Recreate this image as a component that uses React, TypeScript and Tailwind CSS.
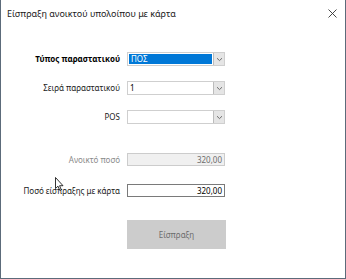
import React from 'react';

const font = { fontFamily: '"Noto Sans", "Liberation Sans", sans-serif' };

const Chevron = () => (
  <svg width="7" height="5" viewBox="0 0 7 5" className="text-[#606060]">
    <path d="M1 1.2 L3.5 3.6 L6 1.2" fill="none" stroke="currentColor" strokeWidth="0.9" />
  </svg>
);

const Combo = ({ value, selected }: { value: string; selected?: boolean }) => (
  <div className="flex h-[14px] w-[98px] border border-[#cfcfcf] bg-white">
    <div className={`flex flex-1 items-center px-[2px] text-[8px] leading-none ${selected ? 'm-[1px] bg-[#0078d7] text-white' : 'text-black'}`}>
      {value}
    </div>
    <div className="flex w-[11px] items-center justify-center border-l border-[#bcbcbc] bg-[#e5e5e5]">
      <Chevron />
    </div>
  </div>
);

const Row = ({ label, bold, muted, children, className = '' }: { label: string; bold?: boolean; muted?: boolean; children: React.ReactNode; className?: string }) => (
  <div className={`flex items-center ${className}`}>
    <div className={`w-[119px] text-right text-[8px] leading-none ${bold ? 'font-bold text-black' : muted ? 'text-[#8a8a8a]' : 'text-[#1a1a1a]'}`}>
      {label}
    </div>
    <div className="ml-[7px]">{children}</div>
  </div>
);

export default function App() {
  return (
    <div style={font} className="relative flex h-[279px] w-[346px] flex-col border-x border-b border-[#5c6b7a] bg-white">
      <div className="flex h-[27px] items-center justify-between pl-[6px] pr-[8px]">
        <span className="text-[9px] text-[#1a1a1a]">Είσπραξη ανοικτού υπολοίπου με κάρτα</span>
        <svg width="9" height="9" viewBox="0 0 9 9">
          <path d="M0.5 0.5 L8.5 8.5 M8.5 0.5 L0.5 8.5" stroke="#333" strokeWidth="0.9" />
        </svg>
      </div>

      <div className="flex flex-col pt-[25px]">
        <Row label="Τύπος παραστατικού" bold>
          <Combo value="ΠΟΣ" selected />
        </Row>
        <Row label="Σειρά παραστατικού" className="mt-[15px]">
          <Combo value="1" />
        </Row>
        <Row label="POS" className="mt-[15px]">
          <Combo value="" />
        </Row>
        <Row label="Ανοικτό ποσό" muted className="mt-[29px]">
          <div className="flex h-[13px] w-[98px] items-center justify-end border border-[#cccccc] bg-[#f0f0f0] px-[2px] text-[8px] leading-none text-[#6d6d6d]">
            320,00
          </div>
        </Row>
        <Row label="Ποσό είσπραξης με κάρτα" className="mt-[18px]">
          <div className="flex h-[13px] w-[98px] items-center justify-end border border-[#7a7a7a] bg-white px-[2px] text-[8px] leading-none text-black">
            320,00
          </div>
        </Row>
        <div className="ml-[126px] mt-[23px] flex h-[29px] w-[99px] items-center justify-center bg-[#cccccc] text-[8px] text-[#6d6d6d]">
          Είσπραξη
        </div>
      </div>

      <svg className="absolute left-[54px] top-[177px]" width="9" height="15" viewBox="0 0 9 15">
        <path d="M0.5 0.5 L0.5 11.5 L3 9.2 L4.8 13.5 L6.3 12.8 L4.6 8.7 L8 8.7 Z" fill="#fff" stroke="#000" strokeWidth="0.8" strokeLinejoin="round" />
      </svg>
    </div>
  );
}
